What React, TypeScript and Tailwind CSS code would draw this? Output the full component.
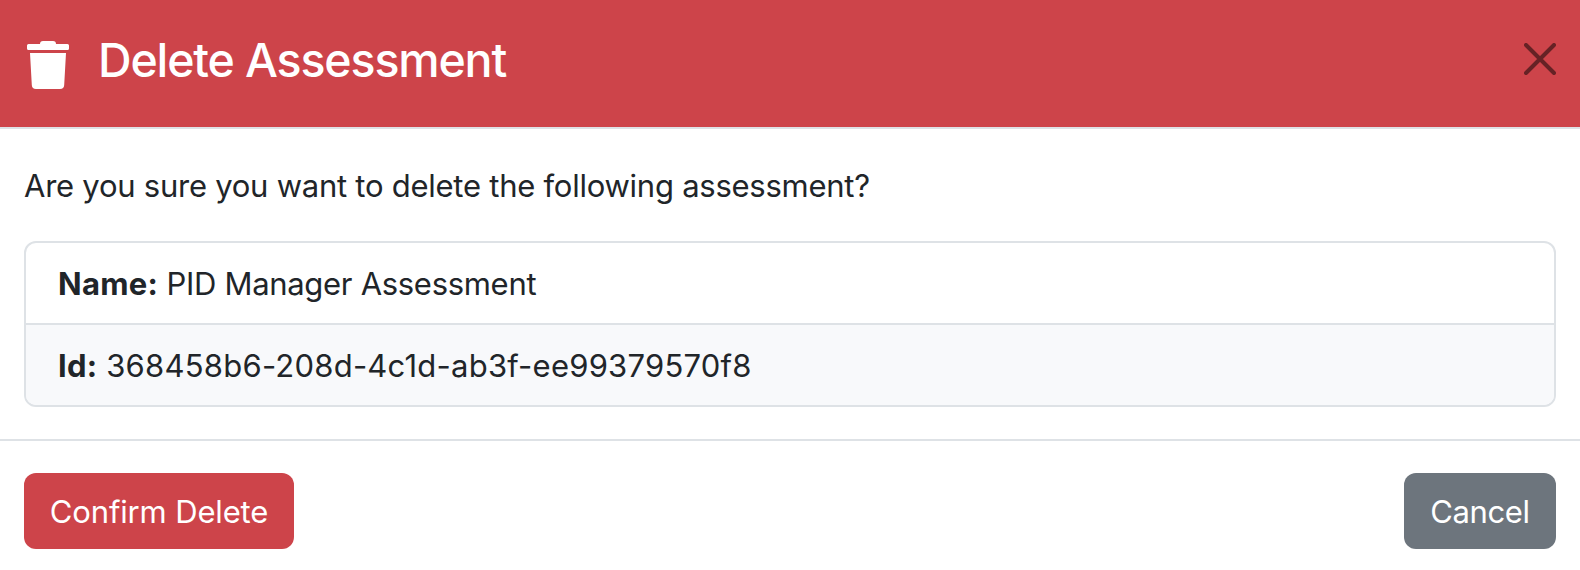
export default function App() {
  return (
    <div className="flex h-[570px] w-[1580px] flex-col overflow-hidden bg-white font-['Inter',sans-serif] text-[31px] leading-[48px] text-[#212529]">
      <header className="flex h-[129px] shrink-0 items-start justify-between border-b-2 border-[#dee2e6] bg-[#cd444a] pl-6 text-white">
        <div className="flex pt-[30px]">
          <svg className="mt-[11px] h-12 w-12" viewBox="0 0 48 48" fill="currentColor" aria-hidden="true">
            <path d="M16 3 Q16 0 19 0 H29 Q32 0 32 3 H43.500 Q45 3 45 4.500 V7.500 Q45 9 43.500 9 H4.500 Q3 9 3 7.500 V4.500 Q3 3 4.500 3 Z M6 12 H42 L40.200 44 Q40 48 36 48 H12 Q8 48 7.800 44 Z" />
          </svg>
          <h1 className="ml-[26px] text-[46.5px] leading-[60px] font-medium tracking-[-1.15px]">Delete Assessment</h1>
        </div>
        <button aria-label="Close" className="mt-[43px] mr-6">
          <svg className="h-8 w-8" viewBox="0 0 32 32" stroke="#662225" strokeWidth="4" strokeLinecap="round" aria-hidden="true">
            <path d="M2 2 L30 30 M30 2 L2 30" />
          </svg>
        </button>
      </header>
      <main className="h-[310px] shrink-0 px-6 pt-[33px]">
        <p className="tracking-[-0.25px]">Are you sure you want to delete the following assessment?</p>
        <ul className="mt-[31px] overflow-hidden rounded-xl border-2 border-[#dee2e6]">
          <li className="h-[82px] border-b-2 border-[#dee2e6] px-8 pt-[17px] tracking-[-0.3px]"><strong className="tracking-[0.25px]">Name:</strong> PID Manager Assessment</li>
          <li className="h-20 bg-[#f8f9fb] px-8 pt-[17px] tracking-[0.23px]"><strong>Id:</strong> 368458b6-208d-4c1d-ab3f-ee99379570f8</li>
        </ul>
      </main>
      <footer className="flex grow items-start justify-between border-t-2 border-[#dee2e6] px-6 pt-8 text-white">
        <button className="h-[76px] w-[270px] rounded-xl bg-[#cd444a] pt-0.5 tracking-[-0.15px]">Confirm Delete</button>
        <button className="h-[76px] w-[152px] rounded-xl bg-[#6d757d] pt-0.5 tracking-[-0.4px]">Cancel</button>
      </footer>
    </div>
  );
}
